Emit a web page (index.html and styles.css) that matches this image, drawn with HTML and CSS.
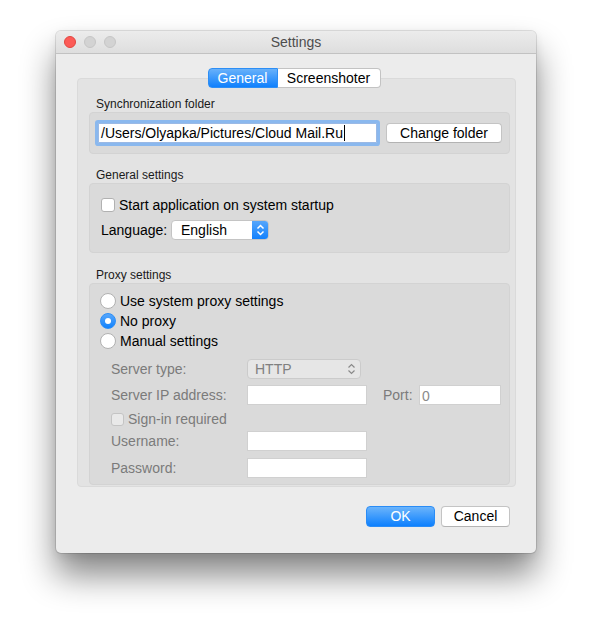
FILE: index.html
```html
<!DOCTYPE html>
<html lang="en">
<head>
    <meta charset="UTF-8">
    <title>Settings</title>
    <link rel="stylesheet" href="styles.css">
</head>
<body>

<div class="window">

    <div class="titlebar">
        <span class="light red"></span>
        <span class="light"></span>
        <span class="light"></span>
        <span class="title">Settings</span>
    </div>

    <div class="tabs">
        <span class="tab active">General</span>
        <span class="tab last">Screenshoter</span>
    </div>

    <div class="pane">

        <div class="grouptitle">Synchronization folder</div>
        <div class="group sync">
            <div class="textfield focus">/Users/Olyapka/Pictures/Cloud Mail.Ru<span class="caret"></span></div>
            <span class="button folderbtn">Change folder</span>
        </div>

        <div class="grouptitle">General settings</div>
        <div class="group general">
            <div class="row">
                <span class="checkbox"></span>
                <span>Start application on system startup</span>
            </div>
            <div class="row langrow">
                <span class="langlabel">Language:</span>
                <div class="popup">
                    <span class="popuptext">English</span>
                    <span class="arrows">
                        <svg width="9" height="12" viewBox="0 0 9 12"><path d="M1.5 4.5 L4.5 1.5 L7.5 4.5 M1.5 7.5 L4.5 10.5 L7.5 7.5" fill="none" stroke="#fff" stroke-width="1.5"/></svg>
                    </span>
                </div>
            </div>
        </div>

        <div class="grouptitle">Proxy settings</div>
        <div class="group proxy">
            <div class="row radiorow"><span class="radio"></span><span>Use system proxy settings</span></div>
            <div class="row radiorow"><span class="radio on"></span><span>No proxy</span></div>
            <div class="row radiorow"><span class="radio"></span><span>Manual settings</span></div>

            <div class="manual">
                <div class="frow r1">
                    <span class="flabel">Server type:</span>
                    <div class="popup off">
                        <span class="popuptext">HTTP</span>
                        <svg class="offarrows" width="9" height="12" viewBox="0 0 9 12"><path d="M1.5 4.5 L4.5 1.5 L7.5 4.5 M1.5 7.5 L4.5 10.5 L7.5 7.5" fill="none" stroke="#8a8a8a" stroke-width="1.2"/></svg>
                    </div>
                </div>
                <div class="frow r2">
                    <span class="flabel">Server IP address:</span>
                    <span class="field"></span>
                    <span class="portlabel">Port:</span>
                    <span class="field port">0</span>
                </div>
                <div class="frow r3">
                    <span class="checkbox off"></span>
                    <span class="dim">Sign-in required</span>
                </div>
                <div class="frow r4">
                    <span class="flabel">Username:</span>
                    <span class="field"></span>
                </div>
                <div class="frow r5">
                    <span class="flabel">Password:</span>
                    <span class="field"></span>
                </div>
            </div>
        </div>

    </div>

    <div class="buttons">
        <span class="button ok">OK</span>
        <span class="button">Cancel</span>
    </div>

</div>

</body>
</html>
```

FILE: styles.css
```css
*{
    margin:0;
    padding:0;
    box-sizing: border-box;
}

body{
    background: #fff;
    font-family: "Liberation Sans", Arial, sans-serif;
    font-size: 14px;
    color: #000;
    padding-top: 31px;
    min-height: 634px;
}

.window{
    width: 480px;
    height: 522px;
    margin-left: 56px;
    background: #ececec;
    border-radius: 5px;
    box-shadow:
        0 0 0 1px rgba(0,0,0,0.11),
        0 3px 10px rgba(0,0,0,0.08),
        0 22px 34px rgba(0,0,0,0.48);
    display: flex;
    flex-direction: column;
}

/* title bar with the three window buttons */
.titlebar{
    height: 23px;
    border-bottom: 1px solid #c2c2c2;
    border-radius: 5px 5px 0 0;
    background: linear-gradient(#ececec, #dedede);
    display: flex;
    align-items: center;
    padding-left: 8px;
    position: relative;
}

.light{
    width: 12px;
    height: 12px;
    border-radius: 50%;
    background: #d3d3d3;
    border: 1px solid #c6c6c6;
    margin-right: 8px;
}

.light.red{
    background: #fc5b57;
    border-color: #e2463f;
}

.title{
    position: absolute;
    left: 0;
    right: 0;
    text-align: center;
    color: #4d4d4d;
    font-size: 14px;
    pointer-events: none;
}

/* tab switcher */
.tabs{
    display: flex;
    justify-content: center;
    margin-top: 14px;
    padding-right: 4px;
    position: relative;
    z-index: 1;
}

.tab{
    height: 20px;
    line-height: 19px;
    background: #fff;
    border: 1px solid #c3c3c3;
    text-align: center;
}

.tab.active{
    width: 70px;
    color: #fff;
    background: linear-gradient(#68b1fa, #0f80fd);
    border-color: #2d8ef5;
    border-radius: 4px 0 0 4px;
}

.tab.last{
    width: 103px;
    border-left: none;
    border-radius: 0 4px 4px 0;
}

.pane{
    height: 409px;
    margin: -10px 20px 0 21px;
    background: #e3e3e3;
    border: 1px solid #dadada;
    border-radius: 4px;
    padding: 17px 5px 1px 11px;
}

.grouptitle{
    height: 16px;
    line-height: 16px;
    font-size: 12px;
    padding-left: 7px;
    color: #1a1a1a;
}

.group{
    background: #dadada;
    border: 1px solid #d3d3d3;
    border-radius: 4px;
}

.sync{
    height: 42px;
    margin-bottom: 13px;
    display: flex;
    align-items: center;
    padding: 0 7px 0 8px;
}

.textfield{
    width: 279px;
    height: 20px;
    line-height: 19px;
    background: #fff;
    border: 1px solid #9ab9e5;
    padding-left: 2px;
    white-space: nowrap;
    overflow: hidden;
}

.textfield.focus{
    box-shadow: 0 0 0 3px #8ab8ee;
    border-radius: 1px;
}

.caret{
    display: inline-block;
    width: 1px;
    height: 16px;
    margin-left: 1px;
    background: #000;
    vertical-align: -3px;
}

.button{
    display: inline-block;
    height: 21px;
    line-height: 19px;
    text-align: center;
    background: #fff;
    border: 1px solid #c4c4c4;
    border-bottom-color: #b3b3b3;
    border-radius: 4px;
}

.folderbtn{
    width: 116px;
    margin-left: auto;
    height: 20px;
}

.general{
    height: 70px;
    margin-bottom: 14px;
    padding: 11px 0 0 11px;
}

.row{
    display: flex;
    align-items: center;
    height: 20px;
}

.checkbox{
    width: 14px;
    height: 14px;
    background: #fff;
    border: 1px solid #b1b1b1;
    border-radius: 3px;
    margin-right: 4px;
}

.langrow{
    margin-top: 5px;
}

.langlabel{
    width: 70px;
}

.popup{
    display: flex;
    align-items: center;
    width: 98px;
    height: 20px;
    background: #fff;
    border: 1px solid #c4c4c4;
    border-radius: 4px;
    overflow: hidden;
}

.popuptext{
    flex: 1;
    padding-left: 9px;
}

.arrows{
    width: 17px;
    height: 20px;
    margin: -1px -1px -1px 0;
    background: linear-gradient(#5aa8fb, #0e7ffd);
    border-radius: 0 4px 4px 0;
    display: flex;
    align-items: center;
    justify-content: center;
}

.proxy{
    height: 202px;
    padding: 7px 0 0 10px;
}

.radio{
    width: 16px;
    height: 16px;
    border-radius: 50%;
    background: #fff;
    border: 1px solid #b1b1b1;
    margin-right: 4px;
    position: relative;
}

.radio.on{
    background: linear-gradient(#58a7fb, #1182fd);
    border-color: #2c8ef7;
}

.radio.on::after{
    content: "";
    position: absolute;
    left: 4px;
    top: 4px;
    width: 6px;
    height: 6px;
    border-radius: 50%;
    background: #fff;
}

/* disabled manual proxy fields */
.manual{
    padding-left: 11px;
    color: #7b7b7b;
}

.frow{
    display: flex;
    align-items: center;
    height: 20px;
}

.r1{ margin-top: 8px; }
.r2{ margin-top: 6px; }
.r3{ margin-top: 4px; }
.r4{ margin-top: 2px; }
.r5{ margin-top: 7px; }

.flabel{
    width: 136px;
}

.field{
    width: 120px;
    height: 20px;
    line-height: 20px;
    background: #fff;
    border: 1px solid #d0d0d0;
    padding-left: 2px;
}

.portlabel{
    margin-left: 16px;
    width: 36px;
}

.field.port{
    width: 82px;
    color: #8a8a8a;
}

.checkbox.off{
    width: 13px;
    height: 13px;
    background: #e9e9e9;
    border-color: #c4c4c4;
}

.dim{
    color: #7b7b7b;
}

.popup.off{
    width: 114px;
    background: #e6e6e6;
    border-color: #cbcbcb;
    color: #808080;
    padding-right: 4px;
}

.popup.off .popuptext{
    padding-left: 7px;
}

.buttons{
    display: flex;
    justify-content: flex-end;
    gap: 6px;
    margin-top: 19px;
    padding-right: 26px;
}

.buttons .button{
    width: 69px;
}

.button.ok{
    color: #fff;
    background: linear-gradient(#6bb4fb, #0d80fe);
    border-color: #2a8cf6;
}
```
